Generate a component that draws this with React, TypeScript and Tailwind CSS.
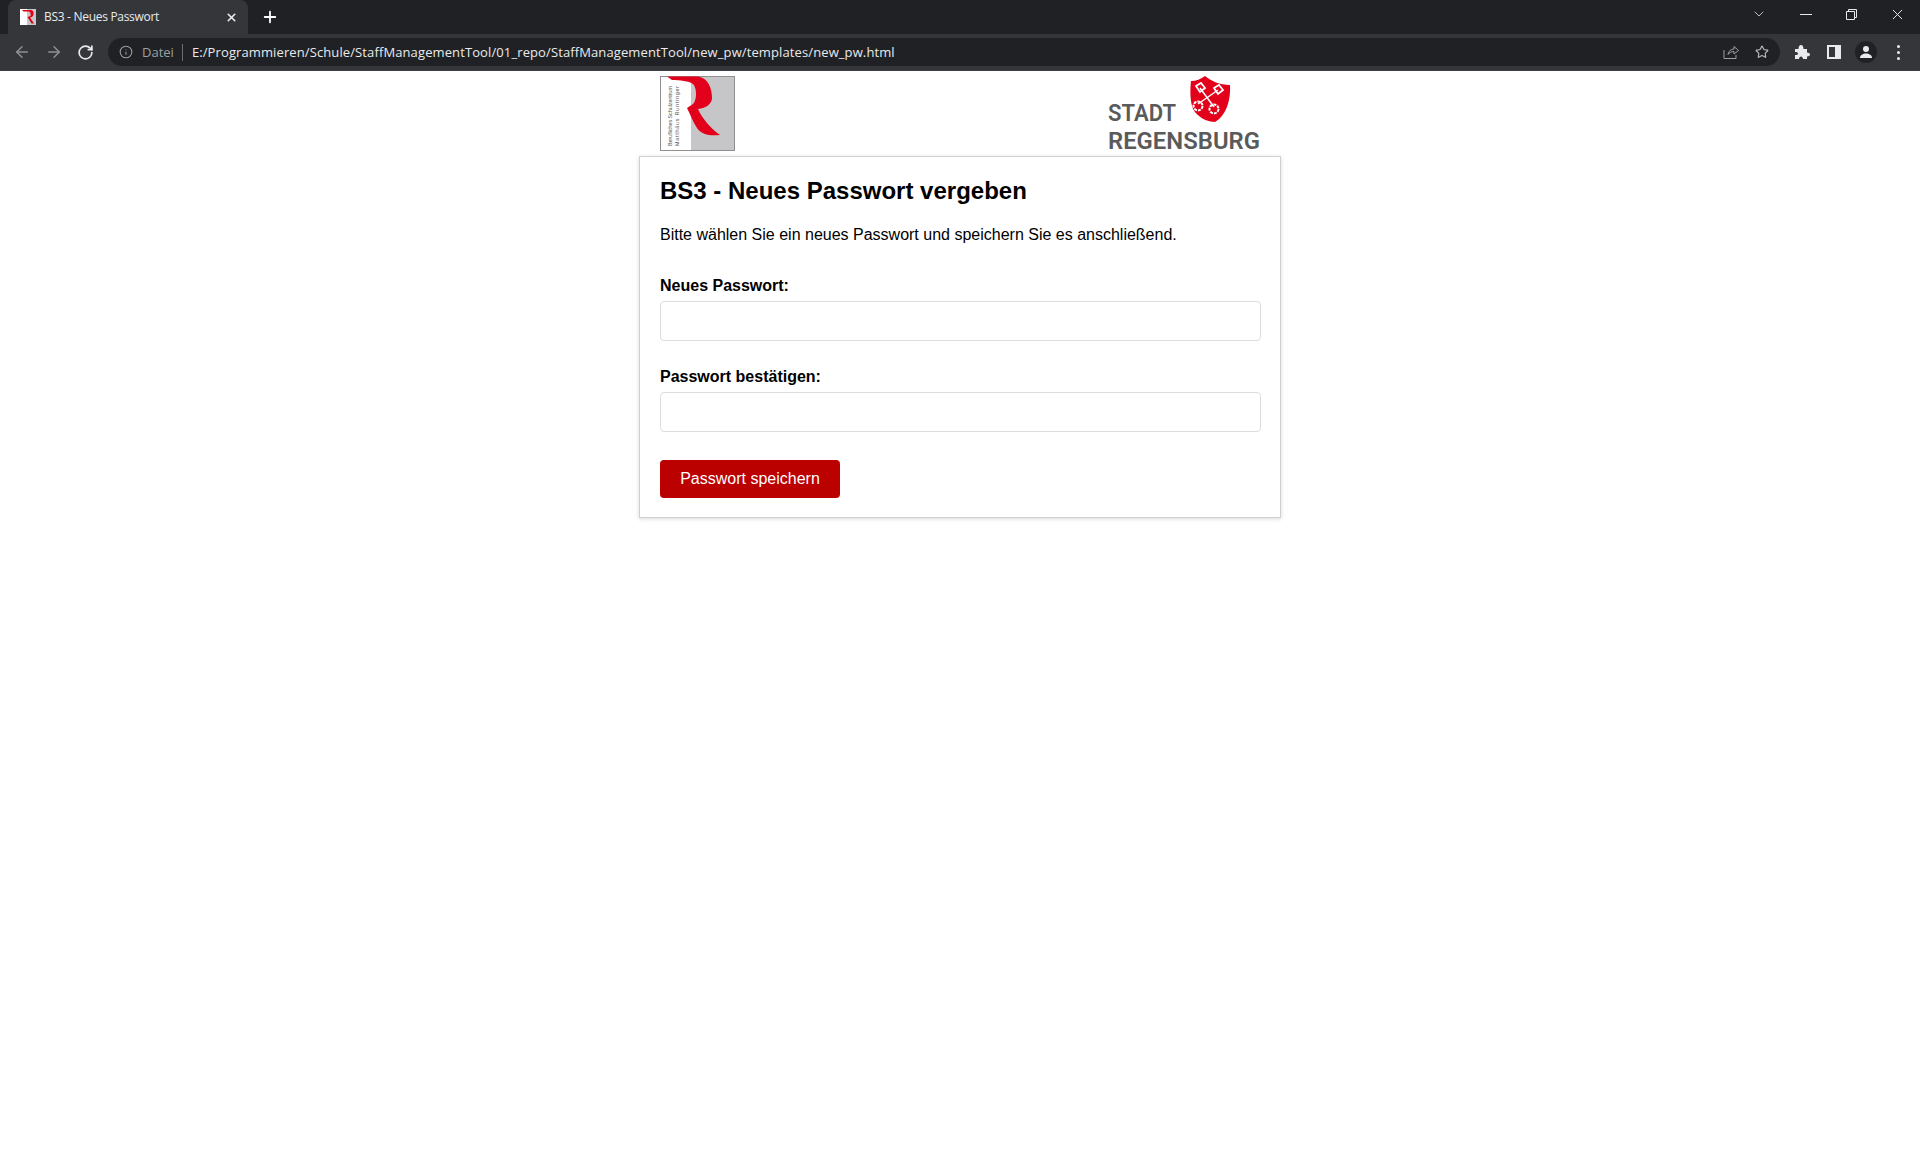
import { ArrowLeft, ArrowRight, ChevronDown, Info, Plus, RotateCw, Star, X } from 'lucide-react';

const uiFont = "font-['Open_Sans','Noto_Sans',sans-serif]";

const SchoolLogo = () => (
  <svg width="75" height="75" viewBox="0 0 75 75" className="block">
    <rect x="0.5" y="0.5" width="74" height="74" fill="#fff" stroke="#8f8f8f" />
    <rect x="31" y="1" width="43" height="73" fill="#c6c6c8" />
    <text transform="translate(12 70) rotate(-90)" fontFamily="Liberation Sans, sans-serif" fontSize="5.4" fill="#555" textLength="60">Berufliches Schulzentrum</text>
    <text transform="translate(19 70) rotate(-90)" fontFamily="Liberation Sans, sans-serif" fontSize="5.4" fill="#555" textLength="60">Matthäus Runtinger</text>
    <path d="M7 0.5L38 0.5C48 2 52 12 52 22C52 28 46 32 38 33C42 42 50 52 60 59C50 60 42 59 37 52C33 46 30 38 27 32L33 28C37 24 37 12 33 8C29 5 20 4 12 4Z" fill="#e2001a" />
  </svg>
);

const CityLogo = () => (
  <svg width="156" height="80" viewBox="0 0 156 80" className="-mb-1 block">
    <text x="0" y="45" fontFamily="Roboto, sans-serif" fontWeight="600" fontSize="23.5" fill="#5a5a5a" textLength="68" lengthAdjust="spacingAndGlyphs">STADT</text>
    <text x="0" y="72.5" fontFamily="Roboto, sans-serif" fontWeight="600" fontSize="23.5" fill="#5a5a5a" textLength="152" lengthAdjust="spacingAndGlyphs">REGENSBURG</text>
    <path d="M83 5C88 5 93 3 97 0C103 5 112 9 122 9C123 24 118 40 107 46C100 46 90 42 85 33C82 25 82 14 83 5Z" fill="#e2001a" />
    <g stroke="#fff" fill="none" strokeWidth="1.5">
      <path d="M92 12L106 31M110 14L90 28" />
      <path d="M88 10L93 7L97 12L92 16Z" strokeWidth="1.8" />
      <path d="M106 12L111 9L115 14L110 18Z" strokeWidth="1.8" />
      <circle cx="90" cy="30" r="4.5" strokeWidth="2" strokeDasharray="3 1" />
      <circle cx="106" cy="33" r="4.5" strokeWidth="2" strokeDasharray="3 1" />
    </g>
  </svg>
);

const Field = ({ label }: { label: string }) => (
  <div className="mb-[25px]">
    <label className="mb-1 block text-[16px] font-bold leading-[22px] text-black">{label}</label>
    <input type="password" className="block h-10 w-full rounded-[4px] border border-[#dddddd] bg-white" />
  </div>
);

const App = () => {
  return (
    <div className="h-[1160px] overflow-hidden bg-white font-['Liberation_Sans',Arial,sans-serif]">
      {/* Browser chrome */}
      <div className={`bg-[#202124] ${uiFont}`}>
        <div className="flex h-[34px] items-center">
          <div className="ml-2 flex h-[34px] w-[240px] items-center self-end rounded-t-lg bg-[#35363a] pl-3 pr-[10px]">
            <svg width="16" height="16" viewBox="0 0 16 16" className="shrink-0">
              <rect width="16" height="16" fill="#fff" />
              <rect x="7" width="9" height="16" fill="#c6c6c8" />
              <path d="M2 1H10C13 1 14 3 13.5 5.5C13 7.5 11.5 8.5 10 8.5L14 14.5H11.5L7.5 8L10.5 7C11 5 10.5 2.5 8.5 2.5H3.5Z" fill="#e2001a" />
            </svg>
            <span className="ml-2 flex-1 text-[12px] tracking-[-0.3px] text-[#e8eaed]">BS3 - Neues Passwort</span>
            <X className="h-[13px] w-[13px] text-[#e8eaed]" strokeWidth={3} />
          </div>
          <Plus className="ml-[13px] h-[18px] w-[18px] text-white" strokeWidth={2.4} />
          <div className="flex-1" />
          <ChevronDown className="mb-[6px] mr-[-5px] h-4 w-4 text-[#c4c7cc]" strokeWidth={1.4} />
          <div className="ml-[38px] mb-[6px] h-px w-[12px] bg-[#e8eaed]" />
          <svg width="11" height="11" viewBox="0 0 11 11" className="mb-[6px] ml-[34px] text-[#e8eaed]" fill="none" stroke="currentColor">
            <path d="M0.5 2.5H8.5V10.5H0.5Z M2.5 2.5V0.5H10.5V8.5H8.5" />
          </svg>
          <X className="mb-[6px] ml-[32px] mr-[14px] h-[17px] w-[17px] text-[#e8eaed]" strokeWidth={1.4} />
        </div>
        <div className="flex h-[37px] items-center border-b border-[#3c3d41] bg-[#35363a]">
          <ArrowLeft className="ml-[13px] h-[18px] w-[18px] text-[#8f9194]" strokeWidth={2} />
          <ArrowRight className="ml-[14px] h-[18px] w-[18px] text-[#8f9194]" strokeWidth={2} />
          <RotateCw className="ml-[14px] h-[17px] w-[17px] text-[#e8eaed]" strokeWidth={2.4} />
          <div className="ml-[14px] flex h-7 w-[1672px] shrink-0 items-center rounded-full bg-[#202124] pl-[11px] pr-[11px]">
            <Info className="h-[14px] w-[14px] text-[#9aa0a6]" strokeWidth={1.8} />
            <span className="ml-[9px] pt-[2px] text-[13px] text-[#9aa0a6]">Datei</span>
            <div className="ml-[8px] h-[17px] w-px bg-[#6b6e73]" />
            <span className="ml-[9px] flex-1 pt-[2px] text-[13px] tracking-[0.11px] text-[#e8eaed]">E:/Programmieren/Schule/StaffManagementTool/01_repo/StaffManagementTool/new_pw/templates/new_pw.html</span>
            <svg width="16" height="16" viewBox="0 0 16 16" fill="none" stroke="#9aa0a6" strokeWidth="1">
              <path d="M1 6V14.5H13V11M5 10.5C5.5 7 8 5 11 5V2.5L15.5 6.5L11 10V7.5C8.5 7.5 6.5 8.5 5 10.5Z" />
            </svg>
            <Star className="ml-4 h-[14px] w-[14px] text-[#b5b8bc]" strokeWidth={2} />
          </div>
          <svg width="16" height="16" viewBox="0 0 16 16" className="ml-[14px] shrink-0" fill="#e8eaed">
            <path d="M1 5H4.5C4.5 2.5 5.5 1 7 1C8.5 1 9.5 2.5 9.5 5H13V8.5C15 8.5 16 9.5 16 10.5C16 11.5 15 12.5 13 12.5V15H9C9 13.5 8 12.5 7 12.5C6 12.5 5 13.5 5 15H1V11C3 11 4 10.5 4 9.5C4 8.5 3 8 1 8Z" />
          </svg>
          <svg width="14" height="14" viewBox="0 0 14 14" className="ml-[17px] shrink-0">
            <rect width="14" height="14" fill="#e8eaed" />
            <rect x="2" y="2" width="6" height="10" fill="#35363a" />
          </svg>
          <div className="ml-[14px] flex h-[22px] w-[22px] shrink-0 items-center justify-center rounded-full bg-[#202124]">
            <svg width="14" height="14" viewBox="0 0 14 14" fill="#e8eaed">
              <circle cx="7" cy="4" r="3" />
              <path d="M1 13C1 10 4 8.5 7 8.5C10 8.5 13 10 13 13Z" />
            </svg>
          </div>
          <div className="ml-[20px] flex flex-col gap-[3px]">
            <span className="h-[3px] w-[3px] rounded-full bg-[#e8eaed]" />
            <span className="h-[3px] w-[3px] rounded-full bg-[#e8eaed]" />
            <span className="h-[3px] w-[3px] rounded-full bg-[#e8eaed]" />
          </div>
        </div>
      </div>

      {/* Page */}
      <div className="mx-auto w-[642px]">
        <div className="mt-[5px] flex items-start justify-between pl-[21px] pr-[17px]">
          <SchoolLogo />
          <CityLogo />
        </div>
        <div className="mt-1 h-[362px] border border-[#d0d0d0] bg-white pl-5 pr-[19px] pt-5 shadow-[0_1px_4px_rgba(0,0,0,0.15)]">
          <h1 className="text-[24px] font-bold leading-7 text-black">BS3 - Neues Passwort vergeben</h1>
          <p className="mt-[21px] text-[16px] leading-[18px] text-black">Bitte wählen Sie ein neues Passwort und speichern Sie es anschließend.</p>
          <div className="mt-[31px]">
            <Field label="Neues Passwort:" />
            <Field label="Passwort bestätigen:" />
          </div>
          <button className="mt-[3px] h-[38px] w-[180px] rounded-[4px] bg-[#bb0000] text-[16px] text-white">Passwort speichern</button>
        </div>
      </div>
    </div>
  );
};

export default App;
